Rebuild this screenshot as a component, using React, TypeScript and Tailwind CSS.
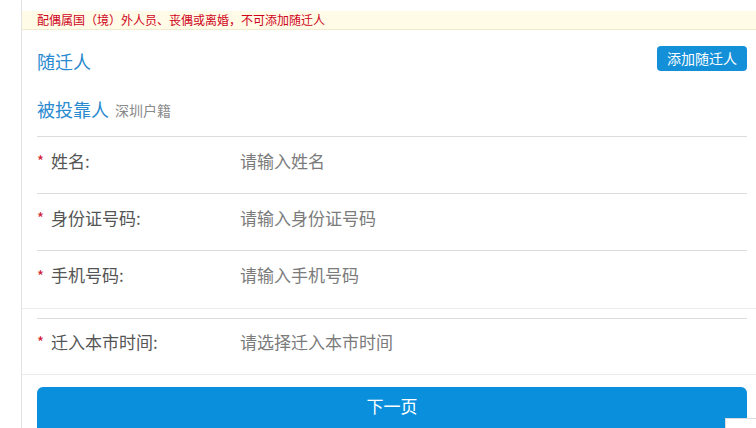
const fields = [
  { label: '姓名:', placeholder: '请输入姓名' },
  { label: '身份证号码:', placeholder: '请输入身份证号码' },
  { label: '手机号码:', placeholder: '请输入手机号码' },
];

function FieldRow({ label, placeholder, last, short }: { label: string; placeholder: string; last?: boolean; short?: boolean }) {
  return (
    <div
      className={`flex items-center ${short ? 'h-[55px] pb-[10px]' : 'h-[57px] pb-[9px]'} ${last ? '' : 'border-b border-[#dcdcdc]'}`}
    >
      <div className="flex w-[203px] shrink-0 items-center">
        <span className="w-[14px] text-[15px] leading-none text-[#d0182e]">*</span>
        <span className="text-[17px] text-[#555]">{label}</span>
      </div>
      <span className="text-[17px] text-[#7b7b7b]">{placeholder}</span>
    </div>
  );
}

export default function App() {
  return (
    <div
      className="relative flex h-[428px] overflow-hidden bg-white"
      style={{ fontFamily: '"Noto Sans CJK SC", "Noto Sans", sans-serif' }}
    >
      <div className="w-[21px] shrink-0" />
      <div className="flex-1 border-l border-[#e3e3e3]">
        {/* notice */}
        <div className="mt-[11px] flex h-[19px] items-center border-b border-[#f1ead0] bg-[#fffbe6] pl-[15px] text-[12px] text-[#d0021b]">
          配偶属国（境）外人员、丧偶或离婚，不可添加随迁人
        </div>

        <div className="pl-[15px] pr-[9px]">
          <div className="mt-[16px] flex h-[25px] items-center justify-between">
            <h2 className="mt-[5px] text-[18px] text-[#2a8ad0]">随迁人</h2>
            <button className="h-[25px] rounded-[4px] bg-[#1490d8] px-[10px] text-[14px] text-white">
              添加随迁人
            </button>
          </div>

          <div className="mt-[24px] flex h-[28px] items-center gap-[6px]">
            <span className="text-[18px] text-[#2a8ad0]">被投靠人</span>
            <span className="mt-[3px] text-[14px] text-[#8a8a8a]">深圳户籍</span>
          </div>

          <div className="mt-[13px] border-t border-[#dcdcdc]">
            {fields.map((f, i) => (
              <FieldRow key={f.label} label={f.label} placeholder={f.placeholder} last={i === fields.length - 1} />
            ))}
          </div>
        </div>

        <div className="border-b border-[#ebebeb]" />

        <div className="mt-[9px] border-b border-[#ebebeb]">
          <div className="ml-[15px] mr-[9px] border-t border-[#dcdcdc]">
            <FieldRow label="迁入本市时间:" placeholder="请选择迁入本市时间" last short />
          </div>
        </div>

        <div className="pl-[15px] pr-[9px] pt-[12px]">
          <button className="flex h-[48px] w-full items-start justify-center rounded-[6px] bg-[#0a8fdc] pt-[6px] text-[17px] text-white">
            下一页
          </button>
        </div>
      </div>
      <div className="absolute bottom-0 right-0 h-[10px] w-[31px] border-l border-t border-[#dcdcdc] bg-white" />
    </div>
  );
}
